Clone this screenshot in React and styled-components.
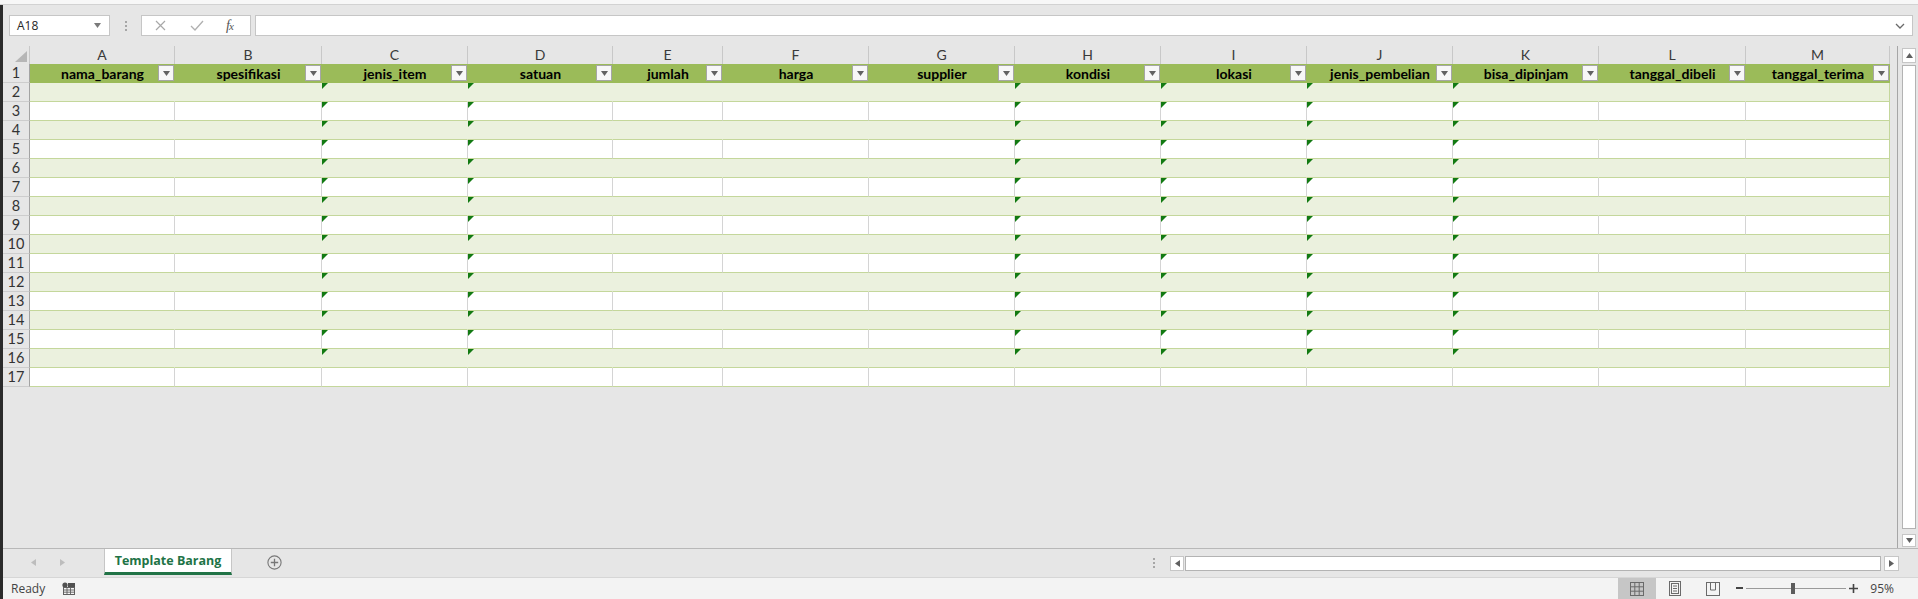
import React from 'react';
import styled, { createGlobalStyle } from 'styled-components';

const GlobalStyle = createGlobalStyle`
  html, body {
    margin: 0;
    padding: 0;
    background: #e6e6e6;
  }
  body {
    font-family: "Open Sans", "Liberation Sans", sans-serif;
    overflow: hidden;
  }
  * {
    box-sizing: border-box;
  }
`;

const COLUMNS = [
  { letter: 'A', name: 'nama_barang', width: 145 },
  { letter: 'B', name: 'spesifikasi', width: 147 },
  { letter: 'C', name: 'jenis_item', width: 146, flagged: true },
  { letter: 'D', name: 'satuan', width: 145, flagged: true },
  { letter: 'E', name: 'jumlah', width: 110 },
  { letter: 'F', name: 'harga', width: 146 },
  { letter: 'G', name: 'supplier', width: 146 },
  { letter: 'H', name: 'kondisi', width: 146, flagged: true },
  { letter: 'I', name: 'lokasi', width: 146, flagged: true },
  { letter: 'J', name: 'jenis_pembelian', width: 146, flagged: true },
  { letter: 'K', name: 'bisa_dipinjam', width: 146, flagged: true },
  { letter: 'L', name: 'tanggal_dibeli', width: 147 },
  { letter: 'M', name: 'tanggal_terima', width: 144 },
];

const DATA_ROWS = Array.from({ length: 16 }, (_, i) => i + 2);
const GRID_TEMPLATE = `27px ${COLUMNS.map(c => `${c.width}px`).join(' ')}`;

const Frame = styled.div`
  width: 1918px;
  height: 599px;
  display: flex;
  flex-direction: column;
  background: #e6e6e6;
`;

const TitleEdge = styled.div`
  height: 5px;
  flex: none;
  background: #f7f7f7;
  border-bottom: 1px solid #d2d2d2;
`;

const Body = styled.div`
  flex: 1;
  display: flex;
  min-height: 0;
`;

const DarkEdge = styled.div`
  width: 3px;
  flex: none;
  background: #2b2b2b;
`;

const Main = styled.div`
  flex: 1;
  display: flex;
  flex-direction: column;
  min-width: 0;
`;

/* formula bar */

const FormulaBar = styled.div`
  height: 41px;
  flex: none;
  display: flex;
  align-items: center;
  padding: 0 5px 0 6px;
`;

const NameBox = styled.div`
  width: 101px;
  height: 21px;
  display: flex;
  align-items: center;
  justify-content: space-between;
  padding: 0 8px 0 7px;
  background: #fff;
  border: 1px solid #c6c6c6;
  font-size: 12px;
  color: #262626;
`;

const Grip = styled.div`
  display: flex;
  flex-direction: column;
  gap: 2px;
  margin: 0 14px 0 15px;

  span {
    width: 2px;
    height: 2px;
    background: #a6a6a6;
  }
`;

const FxBox = styled.div`
  width: 110px;
  height: 21px;
  display: flex;
  align-items: center;
  background: #fff;
  border: 1px solid #c6c6c6;
  padding-left: 13px;
`;

const FxLabel = styled.span`
  margin-left: 22px;
  font-family: "Liberation Serif", serif;
  font-style: italic;
  font-size: 14px;
  color: #555;
  letter-spacing: -1px;

  small {
    font-size: 11px;
  }
`;

const FormulaInput = styled.div`
  flex: 1;
  height: 21px;
  margin-left: 4px;
  display: flex;
  align-items: center;
  justify-content: flex-end;
  padding-right: 7px;
  background: #fff;
  border: 1px solid #c6c6c6;
`;

/* sheet */

const SheetArea = styled.div`
  flex: 1;
  display: flex;
  min-height: 0;
`;

const GridPane = styled.div`
  flex: 1;
  min-width: 0;
`;

const Grid = styled.div`
  display: grid;
  grid-template-columns: ${p => p.$template};
  grid-template-rows: 18px;
  grid-auto-rows: 19px;
  width: max-content;
`;

const Corner = styled.div`
  position: relative;
  border-right: 1px solid #c8c8c8;

  svg {
    position: absolute;
    right: 2px;
    bottom: 2px;
  }
`;

const ColHead = styled.div`
  border-right: 1px solid #c8c8c8;
  text-align: center;
  font-family: Lato, "Liberation Sans", sans-serif;
  font-size: 14px;
  line-height: 18px;
  color: #3a3a3a;
`;

const RowHead = styled.div`
  border-right: 1px solid #a3a3a3;
  border-bottom: 1px solid #cdcdcd;
  text-align: center;
  font-family: Lato, "Liberation Sans", sans-serif;
  font-size: 14.5px;
  line-height: 18px;
  color: #333;
`;

const HeadCell = styled.div`
  position: relative;
  background: #9bbb59;
  text-align: center;
  font-family: Lato, "Liberation Sans", sans-serif;
  font-weight: 700;
  font-size: 14px;
  line-height: 19px;
  color: #000;
`;

const FilterButton = styled.span`
  position: absolute;
  top: 1px;
  right: 1px;
  width: 16px;
  height: 16px;
  display: flex;
  align-items: center;
  justify-content: center;
  background: #f7f7f7;
  border: 1px solid #a6a6a6;
`;

const Cell = styled.div`
  position: relative;
  background: ${p => (p.$band ? '#ebf1de' : '#fff')};
  border-bottom: 1px solid #c4d79b;
  border-right: 1px solid ${p => (p.$last ? '#c4d79b' : p.$band ? '#ebf1de' : '#d4d4d4')};
`;

const Flag = styled.span`
  position: absolute;
  top: 0;
  left: 0;
  width: 0;
  height: 0;
  border-top: 6px solid #127a12;
  border-right: 6px solid transparent;
`;

const VScroll = styled.div`
  width: 21px;
  flex: none;
  display: flex;
  flex-direction: column;
  align-items: flex-start;
  padding: 2px 0 1px 4px;
  border-left: 1px solid #a6a6a6;
`;

const ArrowBox = styled.div`
  width: ${p => p.$w}px;
  height: ${p => p.$h}px;
  flex: none;
  display: flex;
  align-items: center;
  justify-content: center;
  background: #fff;
  border: 1px solid #c6c6c6;
`;

const VThumb = styled.div`
  width: 14px;
  flex: 1;
  margin: 2px 0 5px;
  background: #fff;
  border: 1px solid #b3b3b3;
`;

/* sheet tabs */

const TabBar = styled.div`
  height: 29px;
  flex: none;
  display: flex;
  align-items: flex-start;
  border-top: 1px solid #b8b8b8;
`;

const TabNav = styled.div`
  width: 101px;
  height: 27px;
  display: flex;
  align-items: center;
  gap: 24px;
  padding-left: 28px;
`;

const Tab = styled.div`
  width: 128px;
  height: 26px;
  display: flex;
  align-items: center;
  justify-content: center;
  background: #fff;
  border-left: 1px solid #c6c6c6;
  border-right: 1px solid #c6c6c6;
  border-bottom: 3px solid #217346;
  font-weight: 700;
  font-size: 12.5px;
  color: #217346;
`;

const AddSheet = styled.div`
  height: 27px;
  display: flex;
  align-items: center;
  margin-left: 35px;
`;

const Spacer = styled.div`
  flex: 1;
`;

const TabGrip = styled(Grip)`
  margin: 9px 15px 0 0;
`;

const HScroll = styled.div`
  width: 729px;
  height: 15px;
  margin: 7px 19px 0 0;
  display: flex;
  gap: 1px;
`;

const HThumb = styled.div`
  flex: 1;
  background: #fff;
  border: 1px solid #b3b3b3;
  margin-right: 2px;
`;

/* status bar */

const StatusBar = styled.div`
  height: 22px;
  flex: none;
  display: flex;
  align-items: center;
  background: #f3f3f3;
  border-top: 1px solid #d6d6d6;
  font-size: 12px;
  color: #444;
`;

const Ready = styled.span`
  margin-left: 8px;
  width: 51px;
`;

const ViewButton = styled.div`
  width: 38px;
  height: 21px;
  display: flex;
  align-items: center;
  justify-content: center;
  background: ${p => (p.$active ? '#c6c6c6' : 'transparent')};
`;

const ZoomGroup = styled.div`
  display: flex;
  align-items: center;
  margin-left: 4px;
`;

const SliderTrack = styled.div`
  position: relative;
  width: 100px;
  height: 1px;
  margin: 0 3px;
  background: #9a9a9a;
`;

const SliderThumb = styled.span`
  position: absolute;
  left: 45px;
  top: -5px;
  width: 4px;
  height: 11px;
  background: #5c5c5c;
`;

const ZoomLabel = styled.span`
  margin: 0 24px 0 12px;
`;

const Triangle = ({ dir = 'down', color = '#6a6a6a', size = 7 }) => {
  const s = size;
  const h = Math.ceil(size / 2) + 1;
  const points = {
    down: `0,0 ${s},0 ${s / 2},${h}`,
    up: `0,${h} ${s},${h} ${s / 2},0`,
    left: `${h},0 ${h},${s} 0,${s / 2}`,
    right: `0,0 0,${s} ${h},${s / 2}`,
  }[dir];
  const vertical = dir === 'down' || dir === 'up';
  return (
    <svg width={vertical ? s : h} height={vertical ? h : s} viewBox={`0 0 ${vertical ? s : h} ${vertical ? h : s}`}>
      <polygon points={points} fill={color} />
    </svg>
  );
};

const MacroIcon = () => (
  <svg width="14" height="13" viewBox="0 0 14 13">
    <circle cx="3" cy="3" r="2.6" fill="#505050" />
    <rect x="1.5" y="5.5" width="11" height="7" fill="none" stroke="#606060" />
    <path d="M1.5 8h11M1.5 10.2h11M5 5.5v7M8.5 5.5v7" stroke="#606060" strokeWidth="0.9" />
    <rect x="6" y="1" width="7" height="4" fill="#505050" />
  </svg>
);

const NormalViewIcon = () => (
  <svg width="14" height="14" viewBox="0 0 14 14">
    <rect x="0.5" y="0.5" width="13" height="13" fill="none" stroke="#6a6a6a" />
    <path d="M4.8 0.5v13M9.2 0.5v13M0.5 4.8h13M0.5 9.2h13" stroke="#6a6a6a" />
  </svg>
);

const PageLayoutIcon = () => (
  <svg width="12" height="15" viewBox="0 0 12 15">
    <rect x="0.5" y="0.5" width="11" height="14" fill="none" stroke="#6a6a6a" />
    <rect x="2.5" y="2.5" width="7" height="10" fill="none" stroke="#6a6a6a" />
    <path d="M4 5h4M4 7.5h4M4 10h4" stroke="#6a6a6a" />
  </svg>
);

const PageBreakIcon = () => (
  <svg width="14" height="14" viewBox="0 0 14 14">
    <rect x="0.5" y="0.5" width="13" height="13" fill="none" stroke="#6a6a6a" />
    <path d="M4.5 0.5v7.5h5v-7.5" fill="none" stroke="#6a6a6a" />
  </svg>
);

const App = () => (
  <>
    <GlobalStyle />
    <Frame>
      <TitleEdge />
      <Body>
        <DarkEdge />
        <Main>
          <FormulaBar>
            <NameBox>
              A18
              <Triangle color="#7a7a7a" size={7} />
            </NameBox>
            <Grip>
              <span />
              <span />
              <span />
            </Grip>
            <FxBox>
              <svg width="11" height="11" viewBox="0 0 11 11">
                <path d="M1 1l9 9M10 1l-9 9" stroke="#a8a8a8" strokeWidth="1.2" />
              </svg>
              <svg width="14" height="11" viewBox="0 0 14 11" style={{ marginLeft: 24 }}>
                <path d="M1 6l4 4 8-9" fill="none" stroke="#b0b0b0" strokeWidth="1.3" />
              </svg>
              <FxLabel>
                f<small>x</small>
              </FxLabel>
            </FxBox>
            <FormulaInput>
              <svg width="10" height="6" viewBox="0 0 10 6">
                <path d="M1 1l4 4 4-4" fill="none" stroke="#6a6a6a" strokeWidth="1.3" />
              </svg>
            </FormulaInput>
          </FormulaBar>

          <SheetArea>
            <GridPane>
              <Grid $template={GRID_TEMPLATE}>
                <Corner>
                  <svg width="12" height="11" viewBox="0 0 12 11">
                    <polygon points="12,0 12,11 0,11" fill="#b6b6b6" />
                  </svg>
                </Corner>
                {COLUMNS.map(c => (
                  <ColHead key={c.letter}>{c.letter}</ColHead>
                ))}

                <RowHead>1</RowHead>
                {COLUMNS.map(c => (
                  <HeadCell key={c.letter}>
                    {c.name}
                    <FilterButton>
                      <Triangle color="#626262" size={7} />
                    </FilterButton>
                  </HeadCell>
                ))}

                {DATA_ROWS.map(row => (
                  <React.Fragment key={row}>
                    <RowHead>{row}</RowHead>
                    {COLUMNS.map((c, i) => (
                      <Cell key={c.letter} $band={row % 2 === 0} $last={i === COLUMNS.length - 1}>
                        {c.flagged && row < 17 && <Flag />}
                      </Cell>
                    ))}
                  </React.Fragment>
                ))}
              </Grid>
            </GridPane>
            <VScroll>
              <ArrowBox $w={14} $h={15}>
                <Triangle dir="up" color="#606060" size={7} />
              </ArrowBox>
              <VThumb />
              <ArrowBox $w={14} $h={13}>
                <Triangle dir="down" color="#606060" size={7} />
              </ArrowBox>
            </VScroll>
          </SheetArea>

          <TabBar>
            <TabNav>
              <Triangle dir="left" color="#bdbdbd" size={7} />
              <Triangle dir="right" color="#bdbdbd" size={7} />
            </TabNav>
            <Tab>Template Barang</Tab>
            <AddSheet>
              <svg width="15" height="15" viewBox="0 0 15 15">
                <circle cx="7.5" cy="7.5" r="6.6" fill="none" stroke="#777" strokeWidth="1.1" />
                <path d="M7.5 3.8v7.4M3.8 7.5h7.4" stroke="#777" strokeWidth="1.3" />
              </svg>
            </AddSheet>
            <Spacer />
            <TabGrip>
              <span />
              <span />
              <span />
            </TabGrip>
            <HScroll>
              <ArrowBox $w={14} $h={15}>
                <Triangle dir="left" color="#606060" size={7} />
              </ArrowBox>
              <HThumb />
              <ArrowBox $w={15} $h={15}>
                <Triangle dir="right" color="#606060" size={7} />
              </ArrowBox>
            </HScroll>
          </TabBar>

          <StatusBar>
            <Ready>Ready</Ready>
            <MacroIcon />
            <Spacer />
            <ViewButton $active>
              <NormalViewIcon />
            </ViewButton>
            <ViewButton>
              <PageLayoutIcon />
            </ViewButton>
            <ViewButton>
              <PageBreakIcon />
            </ViewButton>
            <ZoomGroup>
              <svg width="7" height="3" viewBox="0 0 7 3">
                <rect width="7" height="2" fill="#444" />
              </svg>
              <SliderTrack>
                <SliderThumb />
              </SliderTrack>
              <svg width="9" height="9" viewBox="0 0 9 9">
                <path d="M4.5 0v9M0 4.5h9" stroke="#444" strokeWidth="1.6" />
              </svg>
            </ZoomGroup>
            <ZoomLabel>95%</ZoomLabel>
          </StatusBar>
        </Main>
      </Body>
    </Frame>
  </>
);

export default App;
